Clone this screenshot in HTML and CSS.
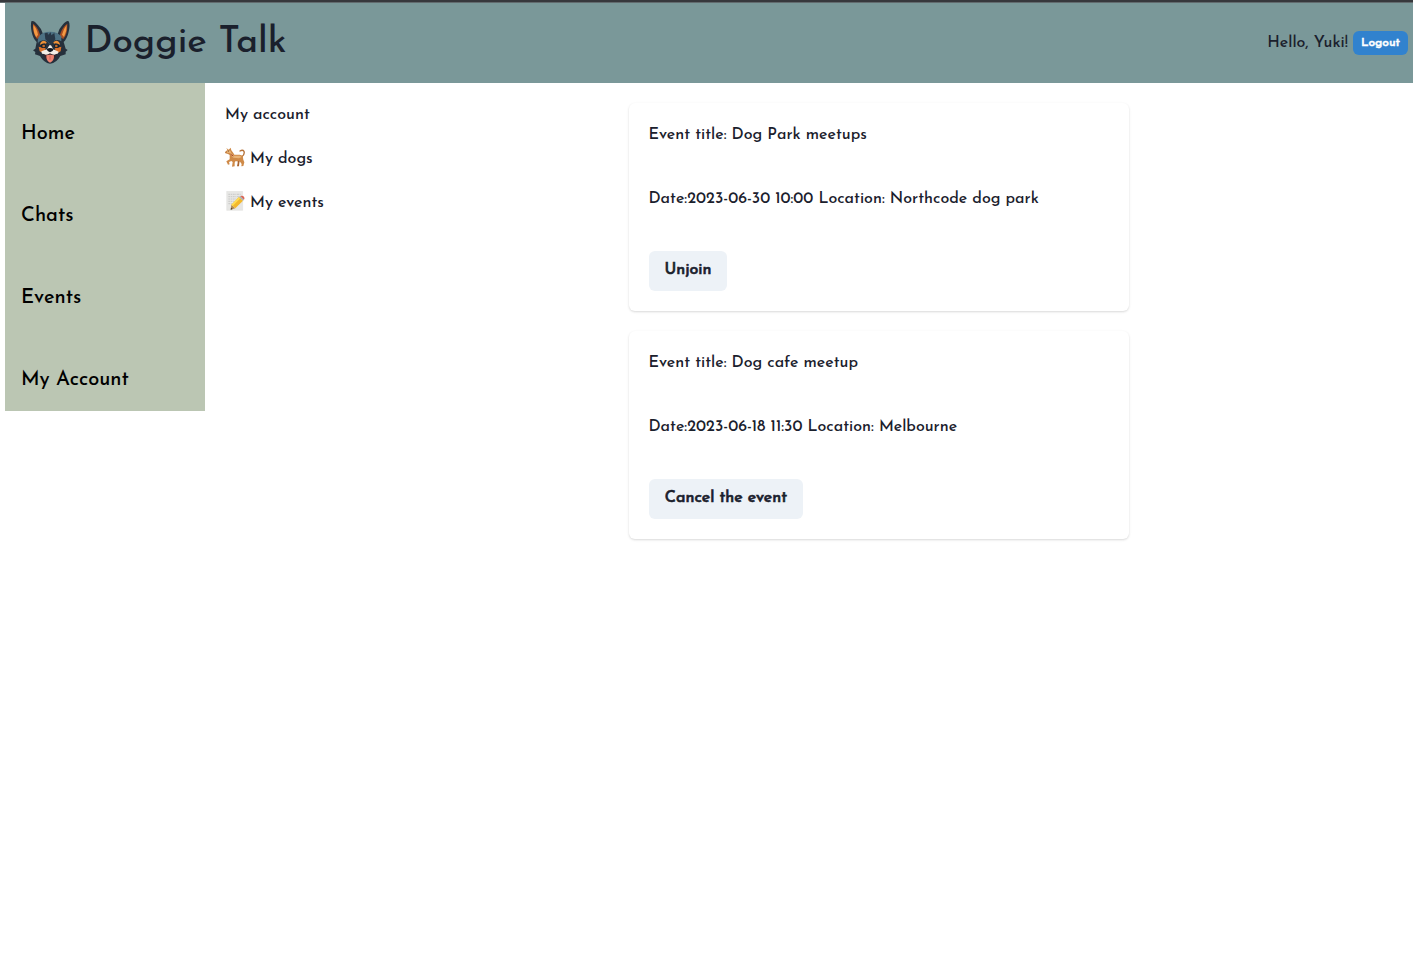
FILE: index.html
```html
<!DOCTYPE html>
<html lang="en">
<head>
<meta charset="utf-8">
<title>Doggie Talk</title>
<link rel="stylesheet" href="styles.css">
</head>
<body>
<div class="topline"></div>
<div class="app">
  <header class="header">
    <div class="brand">
      <svg class="logo" viewBox="0 0 156 168" aria-hidden="true">
        <path fill="#26303c" d="M22 22Q30 18 42 34Q54 46 57 60Q78 48 101 60Q104 44 116 32Q129 17 134 22Q140 32 133 58Q128 76 119 84L125 104L131 108L125 113L125 121L109 126Q98 147 78 149Q60 147 48 126L33 121L34 114L27 109L34 104L38 84Q27 74 23 54Q19 34 22 22Z"/>
        <path fill="#a84d22" d="M27 29Q39 36 46 56L50 68L39 75Q26 60 27 29ZM130 29Q118 36 110 56L106 68L118 75Q131 60 130 29Z"/>
        <path fill="#f39a43" d="M28 33Q38 42 42 62L37 70Q27 54 28 33ZM128 33Q118 45 114 62L120 69Q129 52 128 33Z"/>
        <path fill="#4d7183" d="M46 66Q55 53 78 53Q101 53 112 67L112 82Q98 74 88 82L78 92L69 82Q58 74 44 84L42 90Q39 75 46 66Z"/>
        <path fill="#283746" d="M62 58L71 56L72 63L80 55L82 64L91 57L94 76L80 92L64 76Z"/>
        <path fill="#ee9137" d="M52 83Q61 77 68 85L66 89Q57 86 49 93Q47 87 52 83ZM88 85Q96 77 104 83Q109 87 107 93Q99 86 90 89Z"/>
        <path fill="#d9712b" d="M44 98L65 103L60 119L47 112ZM112 98L92 103L97 119L110 112Z"/>
        <path fill="#f4eee7" d="M76 94L81 94L88 106L104 113L101 119L96 120L89 129L68 129L60 120L54 119L52 112L69 106Z"/>
        <ellipse cx="58" cy="96" rx="8" ry="6" fill="#15202b"/>
        <ellipse cx="98" cy="96" rx="8" ry="6" fill="#15202b"/>
        <circle cx="59" cy="96" r="4" fill="#c2672a"/>
        <circle cx="97" cy="96" r="4" fill="#c2672a"/>
        <path fill="#121923" d="M68 105Q78 99 89 105Q88 112 78 115Q69 112 68 105Z"/>
        <path fill="#3c2429" d="M59 121Q70 124 78 118Q87 124 97 121Q94 134 78 141Q62 135 59 121Z"/>
        <path fill="#ef8371" d="M67 124Q78 120 90 124Q91 142 78 146Q66 142 67 124Z"/>
        <path stroke="#b84f4e" stroke-width="2" d="M78 125V137"/>
      </svg>
      <span class="brand-name">Doggie Talk</span>
    </div>
    <div class="session">
      <span class="greeting">Hello, Yuki!</span>
      <button class="logout">Logout</button>
    </div>
  </header>
  <div class="body">
    <nav class="sidebar">
      <a class="nav-item">Home</a>
      <a class="nav-item">Chats</a>
      <a class="nav-item">Events</a>
      <a class="nav-item">My Account</a>
    </nav>
    <main class="main">
      <section class="account">
        <div class="account-row">My account</div>
        <div class="account-row">
          <svg class="emoji" viewBox="0 0 60 60" aria-hidden="true">
            <path fill="none" stroke="#b5723a" stroke-width="4" stroke-linecap="round" d="M50 30Q60 23 57 13Q53 7 45 12"/>
            <path fill="#cf8a48" d="M4 3L11 8L17 2L19 10L25 18L28 23L44 23L53 26L55 38L58 46L55 57L49 58L50 51L44 43L31 43L29 47L29 58L21 59L23 45L19 42L12 45L14 52L9 53L4 43L14 37L14 24L9 21L1 19L1 14L7 9Z"/>
            <path fill="#e9b477" d="M8 10L16 11L20 20L27 26L45 26L50 30L42 34L25 32L18 25L16 18L5 17Z"/>
            <path fill="#a9642f" d="M0 15L5 14L3 18ZM38 42L44 42L43 48L42 58L36 58L38 48Z"/>
            <circle cx="10" cy="12" r="1.5" fill="#3e2415"/>
            <path d="M17 22L25 27" stroke="#a7482d" stroke-width="3"/>
          </svg>
          <span>My dogs</span>
        </div>
        <div class="account-row">
          <svg class="emoji" viewBox="0 0 60 60" aria-hidden="true">
            <path fill="#e7e7e5" stroke="#d4d4d2" d="M5 1H53V58H5Z"/>
            <path fill="none" stroke="#bbb" stroke-width="2" stroke-dasharray="6 2 3 2" d="M10 10H49M10 17H46M10 24H39M10 31H31M10 38H24"/>
            <path fill="#b58c55" d="M17 56L19 41L31 52Z"/>
            <path fill="#f3b82c" d="M19 41L42 18L54 29L31 52Z"/>
            <path fill="#ffdc50" d="M19 41L42 18L46 22L23 45Z"/>
            <path fill="#a5b4b9" d="M42 18L46 15L57 26L54 29Z"/>
            <path fill="#dc6554" d="M46 15Q52 12 57 17Q60 22 57 26Z"/>
            <path fill="#3d3830" d="M17 56L18 50L23 54Z"/>
          </svg>
          <span>My events</span>
        </div>
      </section>
      <section class="events">
        <article class="card">
          <p class="card-title">Event title: Dog Park meetups</p>
          <p class="card-info">Date:2023-06-30 10:00 Location: Northcode dog park</p>
          <button class="action">Unjoin</button>
        </article>
        <article class="card">
          <p class="card-title">Event title: Dog cafe meetup</p>
          <p class="card-info">Date:2023-06-18 11:30 Location: Melbourne</p>
          <button class="action action-cancel">Cancel the event</button>
        </article>
      </section>
    </main>
  </div>
</div>
</body>
</html>
```

FILE: styles.css
```css
* { box-sizing: border-box; }
body {
  margin: 0;
  background: #fff;
  color: #1a202c;
  font: 500 16px/24px "Josefin Sans", Lato, sans-serif;
}
p { margin: 0; }
button { border: 0; font-family: inherit; color: inherit; }
.topline { height: 3px; background: #37383c; border-bottom: 1px solid #626b6e; }
.app { padding-left: 5px; }
.header {
  height: 80px;
  background: #7a9899;
  display: flex;
  justify-content: space-between;
  align-items: center;
  padding: 0 5px 0 19px;
}
.brand { display: flex; align-items: center; gap: 8.5px; padding-bottom: 2px; }
.logo { width: 52px; height: 56px; }
.brand-name { font-size: 37px; line-height: 48px; padding-top: 2px; }
.session { display: flex; align-items: center; gap: 5px; }
.logout {
  height: 24px;
  width: 55px;
  padding: 0 0 1px;
  border-radius: 6px;
  background: #3182ce;
  color: #fff;
  font-size: 12px;
  font-weight: 500;
  -webkit-text-stroke: 0.5px currentColor;
}
.body { display: flex; align-items: flex-start; }
.sidebar { width: 200px; background: #bbc6b3; }
.nav-item {
  display: block;
  height: 82px;
  padding: 35px 16px 15px;
  font-size: 20px;
  line-height: 32px;
  color: #000;
}
.main { flex: 1; display: flex; padding: 20px; }
.account { width: 403.5px; display: flex; flex-direction: column; gap: 20px; }
.account-row { display: flex; gap: 5px; height: 24px; line-height: 25px; }
.emoji { width: 20px; height: 20px; }
.events { width: 500.5px; display: flex; flex-direction: column; gap: 20px; }
.card {
  height: 208px;
  padding: 20px;
  border-radius: 6px;
  background: #fff;
  box-shadow: 0 1px 3px rgba(0,0,0,.1), 0 1px 2px rgba(0,0,0,.06);
  display: flex;
  flex-direction: column;
  align-items: flex-start;
  gap: 40px;
}
.card-title, .card-info { line-height: 24px; height: 24px; }
.action {
  height: 40px;
  width: 78px;
  padding: 0 0 3px 1px;
  border-radius: 6px;
  background: #edf2f7;
  font-size: 16px;
  font-weight: 500;
  -webkit-text-stroke: 0.6px currentColor;
}
.action-cancel { width: 154px; }
```
